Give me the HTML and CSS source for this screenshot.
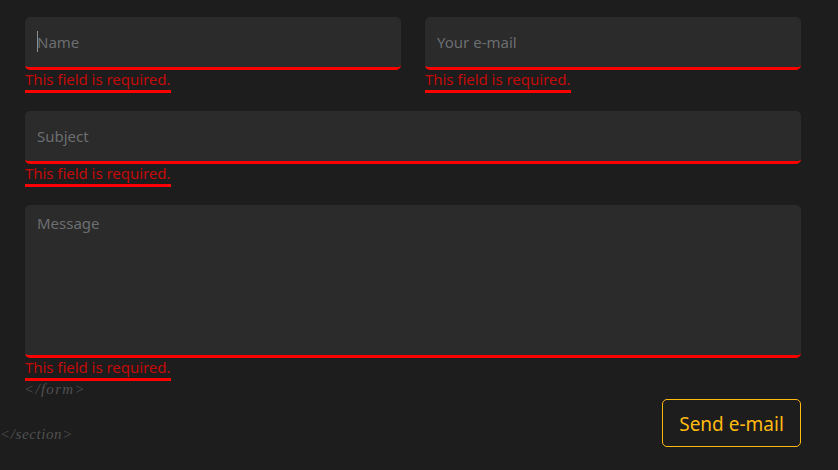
FILE: index.html
```html
<!DOCTYPE html>
<html lang="en">
<head>
<meta charset="utf-8">
<title>Contact</title>
<link rel="stylesheet" href="styles.css">
</head>
<body>
<section class="section">
  <form class="form">
    <div class="row">
      <div class="field">
        <div class="control">
          <input class="input" type="text" placeholder="Name">
          <span class="caret"></span>
        </div>
        <span class="error">This field is required.</span>
      </div>
      <div class="field">
        <div class="control">
          <input class="input" type="text" placeholder="Your e-mail">
        </div>
        <span class="error">This field is required.</span>
      </div>
    </div>
    <div class="field">
      <div class="control">
        <input class="input" type="text" placeholder="Subject">
      </div>
      <span class="error">This field is required.</span>
    </div>
    <div class="field">
      <div class="control">
        <textarea class="input textarea" placeholder="Message"></textarea>
      </div>
      <span class="error">This field is required.</span>
    </div>
  </form>
  <div class="footer">
    <div class="tags">
      <span class="tag tag-form">&lt;/form&gt;</span>
      <span class="tag tag-section">&lt;/section&gt;</span>
    </div>
    <button class="send" type="button">Send e-mail</button>
  </div>
</section>
</body>
</html>
```
FILE: styles.css
```css
* { box-sizing: border-box; }
html, body { margin: 0; height: 100%; }
body {
  background: #1d1d1d;
  font-family: "Noto Sans", "Open Sans", sans-serif;
  overflow: hidden;
}
.section { padding: 17px 37px 0 25px; height: 470px; }
.form { display: flex; flex-direction: column; gap: 18px; }
.row { display: grid; grid-template-columns: 1fr 1fr; gap: 24px; }
.field { display: flex; flex-direction: column; align-items: flex-start; }
.control { position: relative; width: 100%; }
.input {
  display: block;
  width: 100%;
  height: 53px;
  padding: 0 12px;
  background: #2b2b2b;
  border: 0;
  border-bottom: 3px solid #f00;
  border-radius: 5px;
  color: #eee;
  font: inherit;
  font-size: 15px;
  outline: none;
}
.input::placeholder { color: #6b6e70; opacity: 1; }
.textarea { height: 153px; padding-top: 8px; resize: none; }
.caret {
  position: absolute;
  left: 12px;
  top: 14px;
  width: 1px;
  height: 21px;
  background: #8a8f96;
}
.error {
  color: #c20a0a;
  font-size: 15px;
  letter-spacing: -0.04px;
  line-height: 18px;
  height: 23px;
  width: 146px;
  white-space: nowrap;
  border-bottom: 3px solid #f00;
}
.footer { position: relative; display: flex; justify-content: flex-end; margin-top: 18px; }
.tag {
  position: absolute;
  color: #505050;
  font-family: "Liberation Serif", serif;
  font-style: italic;
  font-size: 15px;
  letter-spacing: 0.6px;
  line-height: 16px;
  white-space: nowrap;
}
.tag-form { left: -1px; top: -18px; letter-spacing: 1.3px; }
.tag-section { left: -25px; top: 27px; }
.send {
  width: 139px;
  height: 48px;
  padding: 2px 0 0;
  background: transparent;
  border: 1px solid #fdbb12;
  border-radius: 5px;
  color: #fdbb12;
  font-family: inherit;
  font-size: 19px;
}
```
